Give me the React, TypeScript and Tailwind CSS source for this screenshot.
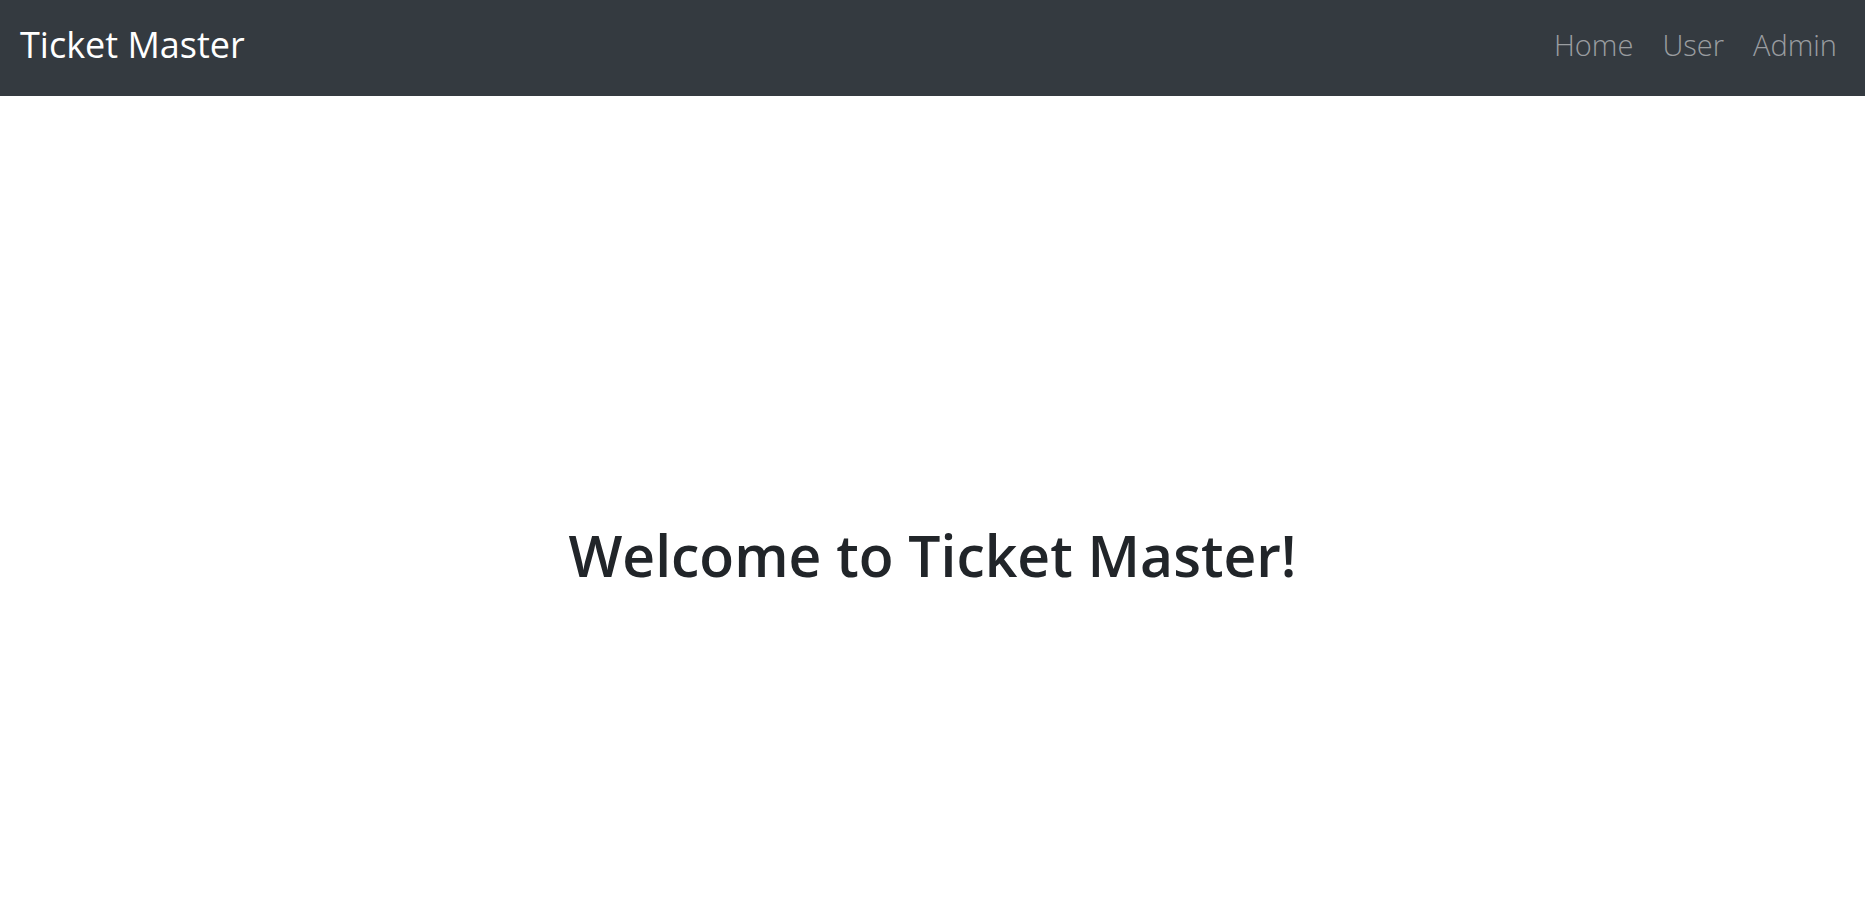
export default function App() {
  return (
    <div className="min-h-screen bg-white font-['Open_Sans',sans-serif]">
      <nav className="flex h-[96px] items-center justify-between bg-[#343a40] pl-[20px] pr-[28px]">
        <a href="#home" className="pb-[6px] text-[36px] leading-none text-white">
          Ticket Master
        </a>
        <div className="flex items-center gap-[29px] pb-[8px] text-[29px] font-light leading-none text-[#9a9da0]">
          <a href="#home" className="hover:text-white">
            Home
          </a>
          <a href="#user" className="hover:text-white">
            User
          </a>
          <a href="#admin" className="hover:text-white">
            Admin
          </a>
        </div>
      </nav>
      <main className="flex justify-center pt-[425px]">
        <h1 className="text-[57px] font-semibold leading-[1.2] text-[#212529]">
          Welcome to Ticket Master!
        </h1>
      </main>
    </div>
  );
}
